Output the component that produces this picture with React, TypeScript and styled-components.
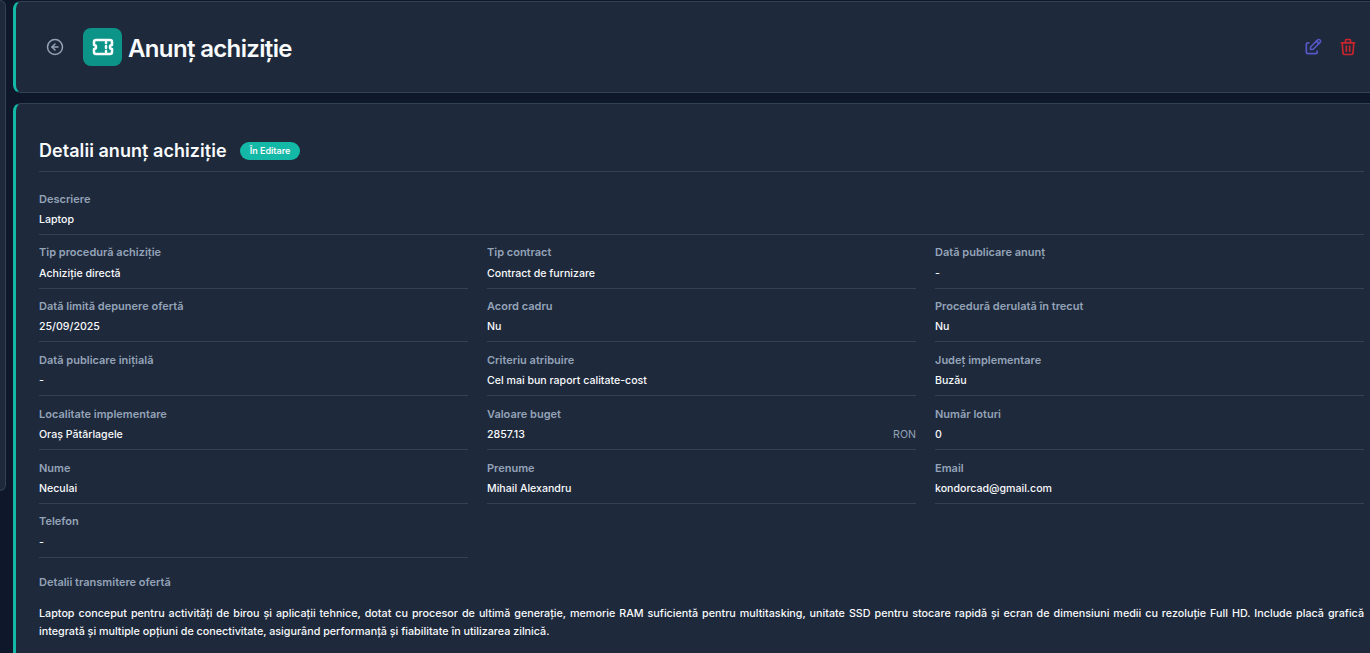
import * as React from 'react';
import styled, { createGlobalStyle } from 'styled-components';

const GlobalStyle = createGlobalStyle`
    html, body {
        margin: 0;
        height: 100%;
        overflow: hidden;
        background: #0f172a;
    }
    body {
        font-family: Inter, "Noto Sans", sans-serif;
        color: #f8fafc;
    }
`;

const Page = styled.div`
    display: flex;
    align-items: flex-start;
    gap: 7px;
    width: 1400px;
    height: 653px;
    overflow: hidden;
`;

const Sidebar = styled.aside`
    flex: none;
    box-sizing: border-box;
    width: 6px;
    height: 491px;
    background: #1e293b;
    border: 1px solid #334155;
    border-left: 0;
    border-radius: 0 8px 8px 0;
`;

const Main = styled.main`
    flex: none;
    display: flex;
    flex-direction: column;
    gap: 10px;
    width: 1376px;
    padding-top: 1px;
`;

const Card = styled.section`
    box-sizing: border-box;
    background: #1e293b;
    border: 1px solid #334155;
    border-left: 3px solid #14b8a6;
    border-radius: 8px;
`;

const HeaderCard = styled(Card)`
    display: flex;
    align-items: center;
    justify-content: space-between;
    height: 92px;
    padding: 0 30px 0 30px;
`;

const TitleGroup = styled.div`
    display: flex;
    align-items: center;
`;

const BackButton = styled.button`
    display: flex;
    width: 18px;
    height: 18px;
    margin-right: 19px;
    padding: 0;
    border: 0;
    background: none;
    color: #94a3b8;
`;

const TitleIcon = styled.div`
    display: flex;
    align-items: center;
    justify-content: center;
    width: 39px;
    height: 38px;
    margin-right: 6px;
    border-radius: 8px;
    background: #0d9488;
    color: #f8fafc;
`;

const Title = styled.h1`
    margin: 4px 0 0;
    font-size: 24px;
    line-height: 32px;
    font-weight: 600;
    letter-spacing: -0.65px;
    color: #f8fafc;
`;

const Actions = styled.div`
    display: flex;
    align-items: center;
    gap: 15px;
`;

const ActionButton = styled.button<{ $color: string }>`
    display: flex;
    width: 20px;
    height: 20px;
    padding: 0;
    border: 0;
    background: none;
    color: ${(p) => p.$color};
`;

const DetailsCard = styled(Card)`
    padding: 30px 24px 24px 23px;
    height: 620px;
`;

const SectionHeader = styled.div`
    display: flex;
    align-items: center;
    gap: 13px;
    height: 38px;
    padding-bottom: 3px;
    box-sizing: border-box;
    border-bottom: 1px solid #334155;
`;

const SectionTitle = styled.h2`
    margin: 0;
    font-size: 18px;
    line-height: 28px;
    font-weight: 600;
    letter-spacing: 0.05px;
    color: #f8fafc;
`;

const Badge = styled.span`
    padding: 0 10px;
    border-radius: 9px;
    background: #14b8a6;
    font-size: 9px;
    line-height: 18px;
    font-weight: 600;
    color: #f8fafc;
`;

const FieldGrid = styled.div`
    display: grid;
    grid-template-columns: repeat(3, 429px);
    column-gap: 19px;
`;

const Field = styled.div<{ $wide?: boolean }>`
    box-sizing: border-box;
    grid-column: ${(p) => (p.$wide ? '1 / -1' : 'auto')};
    height: ${(p) => (p.$wide ? '62.9px' : '53.8px')};
    padding-top: ${(p) => (p.$wide ? '18.5px' : '9.6px')};
    border-bottom: 1px solid #334155;
`;

const Label = styled.div`
    font-size: 11px;
    line-height: 16px;
    font-weight: 600;
    color: #94a3b8;
`;

const ValueRow = styled.div`
    display: flex;
    justify-content: space-between;
    margin-top: 5.2px;
    font-size: 10.6px;
    line-height: 16px;
    font-weight: 500;
    color: #f8fafc;
`;

const Unit = styled.span`
    font-weight: 400;
    color: #94a3b8;
`;

const OfferLabel = styled(Label)`
    margin-top: 16.5px;
`;

const OfferText = styled.p`
    margin: 15px 0 0;
    font-size: 10.75px;
    line-height: 18px;
    font-weight: 500;
    text-align: justify;
    color: #f8fafc;
`;

const fields: { label: string; value: string; unit?: string; wide?: boolean }[] = [
    { label: 'Descriere', value: 'Laptop', wide: true },
    { label: 'Tip procedură achiziție', value: 'Achiziție directă' },
    { label: 'Tip contract', value: 'Contract de furnizare' },
    { label: 'Dată publicare anunț', value: '-' },
    { label: 'Dată limită depunere ofertă', value: '25/09/2025' },
    { label: 'Acord cadru', value: 'Nu' },
    { label: 'Procedură derulată în trecut', value: 'Nu' },
    { label: 'Dată publicare inițială', value: '-' },
    { label: 'Criteriu atribuire', value: 'Cel mai bun raport calitate-cost' },
    { label: 'Județ implementare', value: 'Buzău' },
    { label: 'Localitate implementare', value: 'Oraș Pătârlagele' },
    { label: 'Valoare buget', value: '2857.13', unit: 'RON' },
    { label: 'Număr loturi', value: '0' },
    { label: 'Nume', value: 'Neculai' },
    { label: 'Prenume', value: 'Mihail Alexandru' },
    { label: 'Email', value: 'kondorcad@gmail.com' },
    { label: 'Telefon', value: '-' },
];

const BackIcon = () => (
    <svg width="18" height="18" viewBox="0 0 24 24" fill="none" stroke="currentColor" strokeWidth="2" strokeLinecap="round" strokeLinejoin="round">
        <circle cx="12" cy="12" r="10" />
        <path d="M16 12H8" />
        <path d="m12 8-4 4 4 4" />
    </svg>
);

const TicketIcon = () => (
    <svg width="24" height="24" viewBox="0 0 24 24" fill="none" stroke="currentColor" strokeWidth="2.5" strokeLinecap="round" strokeLinejoin="round">
        <path d="M15 11v2" />
        <path d="M15 16v1" />
        <path d="M15 7v1" />
        <path d="M5 5h14a2 2 0 0 1 2 2v3a2 2 0 0 0 0 4v3a2 2 0 0 1-2 2H5a2 2 0 0 1-2-2v-3a2 2 0 0 0 0-4V7a2 2 0 0 1 2-2" />
    </svg>
);

const EditIcon = () => (
    <svg width="20" height="20" viewBox="0 0 24 24" fill="none" stroke="currentColor" strokeWidth="2" strokeLinecap="round" strokeLinejoin="round">
        <path d="M7 7H6a2 2 0 0 0-2 2v9a2 2 0 0 0 2 2h9a2 2 0 0 0 2-2v-1" />
        <path d="M20.385 6.585a2.1 2.1 0 0 0-2.97-2.97L9 12v3h3l8.385-8.415Z" />
        <path d="m16 5 3 3" />
    </svg>
);

const TrashIcon = () => (
    <svg width="20" height="20" viewBox="0 0 24 24" fill="none" stroke="currentColor" strokeWidth="2" strokeLinecap="round" strokeLinejoin="round">
        <path d="M4 7h16" />
        <path d="M10 11v6" />
        <path d="M14 11v6" />
        <path d="m5 7 1 12a2 2 0 0 0 2 2h8a2 2 0 0 0 2-2l1-12" />
        <path d="M9 7V4a1 1 0 0 1 1-1h4a1 1 0 0 1 1 1v3" />
    </svg>
);

const App: React.FC = () => {
    return (
        <Page>
            <GlobalStyle />
            <Sidebar />
            <Main>
                <HeaderCard>
                    <TitleGroup>
                        <BackButton>
                            <BackIcon />
                        </BackButton>
                        <TitleIcon>
                            <TicketIcon />
                        </TitleIcon>
                        <Title>Anunț achiziție</Title>
                    </TitleGroup>
                    <Actions>
                        <ActionButton $color="#5558c8">
                            <EditIcon />
                        </ActionButton>
                        <ActionButton $color="#c9252c">
                            <TrashIcon />
                        </ActionButton>
                    </Actions>
                </HeaderCard>
                <DetailsCard>
                    <SectionHeader>
                        <SectionTitle>Detalii anunț achiziție</SectionTitle>
                        <Badge>În Editare</Badge>
                    </SectionHeader>
                    <FieldGrid>
                        {fields.map((field) => (
                            <Field key={field.label} $wide={field.wide}>
                                <Label>{field.label}</Label>
                                <ValueRow>
                                    <span>{field.value}</span>
                                    {field.unit && <Unit>{field.unit}</Unit>}
                                </ValueRow>
                            </Field>
                        ))}
                    </FieldGrid>
                    <OfferLabel>Detalii transmitere ofertă</OfferLabel>
                    <OfferText>
                        Laptop conceput pentru activități de birou și aplicații tehnice, dotat cu procesor de ultimă generație, memorie RAM suficientă pentru multitasking, unitate SSD pentru stocare rapidă și ecran de dimensiuni medii cu rezoluție Full HD. Include placă grafică integrată și multiple opțiuni de conectivitate, asigurând performanță și fiabilitate în utilizarea zilnică.
                    </OfferText>
                </DetailsCard>
            </Main>
        </Page>
    );
};

export default App;
